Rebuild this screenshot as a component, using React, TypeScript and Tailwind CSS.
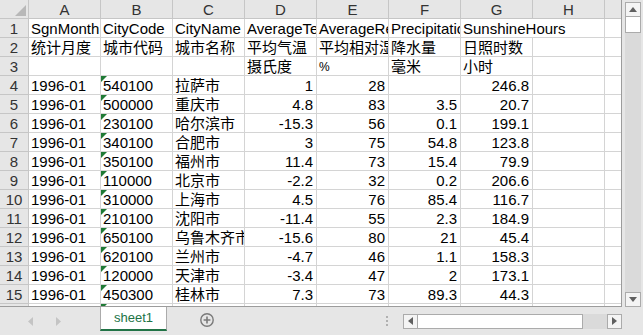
import React from "react";

const FONT = { fontFamily: '"Liberation Sans", "Noto Sans CJK SC", sans-serif' };

type Val = string | number | null;

const HEAD_ROWS: Val[][] = [
	["SgnMonth", "CityCode", "CityName", "AverageTemp", "AverageRelHumidity", "Precipitation", "SunshineHours"],
	["统计月度", "城市代码", "城市名称", "平均气温", "平均相对湿度", "降水量", "日照时数"],
	[null, null, null, "摄氏度", "%", "毫米", "小时"],
];

const DATA: [string, string, number, number, number | null, number][] = [
	["540100", "拉萨市", 1, 28, null, 246.8],
	["500000", "重庆市", 4.8, 83, 3.5, 20.7],
	["230100", "哈尔滨市", -15.3, 56, 0.1, 199.1],
	["340100", "合肥市", 3, 75, 54.8, 123.8],
	["350100", "福州市", 11.4, 73, 15.4, 79.9],
	["110000", "北京市", -2.2, 32, 0.2, 206.6],
	["310000", "上海市", 4.5, 76, 85.4, 116.7],
	["210100", "沈阳市", -11.4, 55, 2.3, 184.9],
	["650100", "乌鲁木齐市", -15.6, 80, 21, 45.4],
	["620100", "兰州市", -4.7, 46, 1.1, 158.3],
	["120000", "天津市", -3.4, 47, 2, 173.1],
	["450300", "桂林市", 7.3, 73, 89.3, 44.3],
];

const COLS = ["A", "B", "C", "D", "E", "F", "G", "H"];

function GreenFlag() {
	return (
		<svg className="absolute left-0 top-0" width="6" height="6" viewBox="0 0 6 6">
			<polygon points="0,0 6,0 0,6" fill="#1f7a35" />
		</svg>
	);
}

function Cell({
	children,
	right,
	flag,
	overflow,
	small,
}: {
	children?: React.ReactNode;
	right?: boolean;
	flag?: boolean;
	overflow?: boolean;
	small?: boolean;
}) {
	return (
		<div
			className={`relative h-[19px] w-[72px] shrink-0 border-b border-[#d4d4d4] whitespace-nowrap leading-[20px] text-black ${
				overflow ? "z-10 overflow-visible" : "overflow-hidden border-r"
			} ${right ? "pr-[3px] text-right" : "pl-[2px]"} ${small ? "text-[12px]" : "text-[15px]"}`}
		>
			{flag && <GreenFlag />}
			{children}
		</div>
	);
}

function RowHead({ n }: { n: number }) {
	return (
		<div className="h-[19px] w-[29px] shrink-0 border-r border-b border-[#c6c6c6] bg-[#e6e6e6] text-center text-[15px] leading-[20px] text-[#333]">
			{n}
		</div>
	);
}

function Tail() {
	return <div className="h-[19px] w-[16px] shrink-0 border-b border-[#d4d4d4]" />;
}

function Grid() {
	return (
		<div className="h-[307px] w-[622px] shrink-0 overflow-hidden border-r border-b border-[#9c9c9c] bg-white">
			<div className="flex h-[19px] bg-[#e6e6e6]">
				<div className="relative h-[19px] w-[29px] shrink-0 border-r border-b border-[#c6c6c6]">
					<svg className="absolute left-[15px] top-[5px]" width="11" height="11" viewBox="0 0 11 11">
						<polygon points="11,0 11,11 0,11" fill="#b8b8b8" />
					</svg>
				</div>
				{COLS.map((c) => (
					<div
						key={c}
						className="h-[19px] w-[72px] shrink-0 border-r border-b border-[#c6c6c6] text-center text-[15px] leading-[20px] text-[#333]"
					>
						{c}
					</div>
				))}
				<div className="h-[19px] w-[16px] shrink-0 border-b border-[#c6c6c6]" />
			</div>
			{HEAD_ROWS.map((r, i) => (
				<div key={i} className="flex">
					<RowHead n={i + 1} />
					{r.map((v, j) => (
						<Cell key={j} overflow={i === 0 && j === 6} small={v === "%"}>
							{v}
						</Cell>
					))}
					<Cell />
					<Tail />
				</div>
			))}
			{DATA.map((d, i) => (
				<div key={i} className="flex">
					<RowHead n={i + 4} />
					<Cell>1996-01</Cell>
					<Cell flag>{d[0]}</Cell>
					<Cell>{d[1]}</Cell>
					<Cell right>{d[2]}</Cell>
					<Cell right>{d[3]}</Cell>
					<Cell right>{d[4]}</Cell>
					<Cell right>{d[5]}</Cell>
					<Cell />
					<Tail />
				</div>
			))}
			<div className="flex">
				<RowHead n={16} />
				<Cell>1996-01</Cell>
				<Cell flag />
				<Cell />
				<Cell />
				<Cell />
				<Cell />
				<Cell />
				<Cell />
				<Tail />
			</div>
		</div>
	);
}

function VScroll() {
	return (
		<div className="flex h-[307px] w-[21px] shrink-0 flex-col pl-[3px] pr-[2px] pt-[2px]">
			<div className="flex h-[15px] items-center justify-center border border-[#ababab] bg-[#f4f4f4]">
				<svg width="8" height="5" viewBox="0 0 8 5">
					<polygon points="4,0 8,5 0,5" fill="#606060" />
				</svg>
			</div>
			<div className="h-[16px] border border-t-0 border-[#ababab] bg-white" />
			<div className="flex-1 bg-[#dadada]" />
			<div className="flex h-[15px] items-center justify-center border border-[#ababab] bg-[#f4f4f4]">
				<svg width="8" height="5" viewBox="0 0 8 5">
					<polygon points="0,0 8,0 4,5" fill="#606060" />
				</svg>
			</div>
		</div>
	);
}

function BottomBar() {
	return (
		<div className="flex h-[28px] items-center">
			<div className="flex w-[100px] shrink-0 items-center pl-[28px]">
				<svg width="5" height="9" viewBox="0 0 5 9">
					<polygon points="5,0 5,9 0,4.5" fill="#c4c4c4" />
				</svg>
				<svg className="ml-[23px]" width="5" height="9" viewBox="0 0 5 9">
					<polygon points="0,0 5,4.5 0,9" fill="#c4c4c4" />
				</svg>
			</div>
			<div className="flex h-[24px] w-[67px] shrink-0 items-center justify-center self-start border-x border-b-2 border-[#ababab] border-b-[#217346] bg-white pb-[1px] text-[13px] text-[#217346]">
				sheet1
			</div>
			<svg className="ml-[33px] mt-[-2px]" width="14" height="14" viewBox="0 0 14 14">
				<circle cx="7" cy="7" r="6.2" fill="none" stroke="#7a7a7a" strokeWidth="1.4" />
				<path d="M7 3.6V10.4M3.6 7H10.4" stroke="#7a7a7a" strokeWidth="1.6" />
			</svg>
			<div className="flex-1" />
			<div className="mr-[15px] flex flex-col gap-[2px]">
				<div className="h-[2px] w-[2px] bg-[#b0b0b0]" />
				<div className="h-[2px] w-[2px] bg-[#b0b0b0]" />
				<div className="h-[2px] w-[2px] bg-[#b0b0b0]" />
			</div>
			<div className="mr-[21px] flex h-[15px] w-[219px] shrink-0">
				<div className="flex w-[15px] items-center justify-center border border-[#ababab] bg-[#f4f4f4]">
					<svg width="5" height="8" viewBox="0 0 5 8">
						<polygon points="5,0 5,8 0,4" fill="#606060" />
					</svg>
				</div>
				<div className="w-[165px] border-y border-r border-[#ababab] bg-white" />
				<div className="flex-1 bg-[#dadada]" />
				<div className="flex w-[15px] items-center justify-center border border-[#ababab] bg-[#f4f4f4]">
					<svg width="5" height="8" viewBox="0 0 5 8">
						<polygon points="0,0 5,4 0,8" fill="#606060" />
					</svg>
				</div>
			</div>
		</div>
	);
}

export default function App() {
	return (
		<div className="flex h-[335px] w-[643px] flex-col overflow-hidden bg-[#e6e6e6]" style={FONT}>
			<div className="flex">
				<Grid />
				<VScroll />
			</div>
			<BottomBar />
		</div>
	);
}
